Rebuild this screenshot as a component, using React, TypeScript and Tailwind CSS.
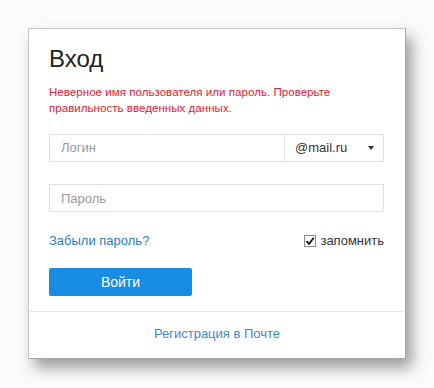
import { useState } from "react";

export default function App() {
  const [remember, setRemember] = useState(true);

  return (
    <div className="min-h-[388px] w-[434px] bg-[#fbfbfb] pl-[28px] pt-[28px] font-['Liberation_Sans',Arial,sans-serif]">
      <div className="flex h-[331px] w-[378px] flex-col border border-[#c8c8c8] border-r-[#a6a6a6] border-b-[#a6a6a6] bg-white shadow-[6px_9px_14px_rgba(0,0,0,0.38)]">
        <div className="px-[20px] pt-[16px]">
          <h1 className="text-[24px] leading-[28px] text-[#222]">Вход</h1>

          <p className="mt-[11px] pr-[30px] text-[11.6px] leading-[16px] text-[#e8202e]">
            Неверное имя пользователя или пароль. Проверьте правильность введенных данных.
          </p>

          {/* login + domain */}
          <div className="mt-[18px] flex h-[28px] w-[335px] border border-[#e0e0e0] text-[13px]">
            <input
              placeholder="Логин"
              className="min-w-0 flex-1 px-[11px] text-[#333] outline-none placeholder:text-[#999]"
            />
            <button className="flex w-[99px] items-center justify-between border-l border-[#e0e0e0] pl-[10px] pr-[9px] text-[#333]">
              <span>@mail.ru</span>
              <span className="h-0 w-0 border-x-[3.5px] border-t-[4px] border-x-transparent border-t-[#333]" />
            </button>
          </div>

          <input
            type="password"
            placeholder="Пароль"
            className="mt-[22px] block h-[28px] w-[335px] border border-[#e0e0e0] px-[11px] text-[13px] text-[#333] outline-none placeholder:text-[#999]"
          />

          <div className="mt-[21px] flex h-[16px] w-[335px] items-center justify-between text-[13px]">
            <a href="#" className="text-[#2b7bc6]">
              Забыли пароль?
            </a>
            <label className="flex items-center gap-[4px] text-[#333]">
              <span
                onClick={() => setRemember(!remember)}
                className="flex h-[12px] w-[12px] items-center justify-center border border-[#8a8a8a] bg-white"
              >
                {remember && (
                  <svg viewBox="0 0 10 10" className="h-[10px] w-[10px]">
                    <path d="M1.5 5.2 L4 7.8 L8.8 1.8" fill="none" stroke="#111" strokeWidth="1.8" />
                  </svg>
                )}
              </span>
              запомнить
            </label>
          </div>

          <button className="mt-[19px] h-[28px] w-[143px] rounded-[2px] bg-[#168de2] text-[14px] text-white">
            Войти
          </button>
        </div>

        <div className="mt-[15px] flex flex-1 items-center justify-center border-t border-[#e6e6e6] pb-[2px] text-[13px]">
          <a href="#" className="text-[#3d87c9]">
            Регистрация в Почте
          </a>
        </div>
      </div>
    </div>
  );
}
